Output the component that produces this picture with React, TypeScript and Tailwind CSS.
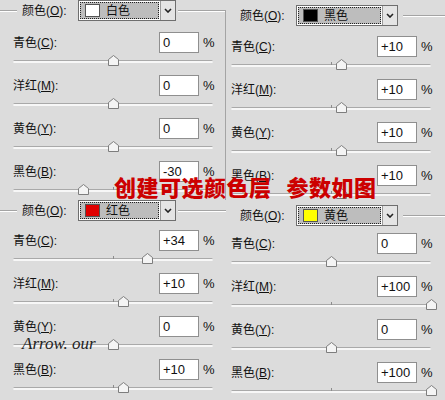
import React from "react";

const ROWS = [
  { cn: "青色", key: "C" },
  { cn: "洋红", key: "M" },
  { cn: "黄色", key: "Y" },
  { cn: "黑色", key: "B" },
];

function fmt(v: number) {
  return v > 0 ? `+${v}` : `${v}`;
}

function EtchedLine({ className = "" }: { className?: string }) {
  return <div className={`h-[2px] border-y border-t-[#a4a4a4] border-b-white ${className}`} />;
}

function Slider({ value }: { value: number }) {
  return (
    <div className="relative mt-[2px] flex h-[12px] w-[200px] items-center">
      <div className="h-[3px] w-full rounded-full border-t border-[#a9a9a9] bg-[#f7f7f7]" />
      <div className="absolute left-[100px] top-[3px] h-[3px] w-px bg-[#8c8c8c]" />
      <svg
        className="absolute top-0"
        style={{ left: 100 + value - 5 }}
        width="11"
        height="11"
        viewBox="0 0 11 11"
      >
        <path d="M0.5 10.5V4.5L5.5 0.5L10.5 4.5V10.5Z" fill="#f4f4f4" stroke="#7d7d7d" />
      </svg>
    </div>
  );
}

function Row({ cn, k, value }: { cn: string; k: string; value: number }) {
  return (
    <div className="flex h-[43px] w-[200px] shrink-0 flex-col">
      <div className="flex h-[21px] items-center">
        <span>
          {cn}(<span className="underline">{k}</span>):
        </span>
        <div className="ml-auto flex items-center gap-[4px]">
          <div className="h-[21px] w-[40px] border border-[#8f8f8f] bg-white pl-[3px] text-[13px] leading-[19px]">
            {fmt(value)}
          </div>
          <span className="w-[10px] text-[13px]">%</span>
        </div>
      </div>
      <Slider value={value} />
    </div>
  );
}

function Dropdown({ name, swatch, wide }: { name: string; swatch: string; wide?: boolean }) {
  return (
    <div className={`flex h-[21px] shrink-0 border border-[#6e6e6e] bg-white ${wide ? "w-[102px]" : "w-[98px]"}`}>
      <div className="m-px flex flex-1 items-center border border-dotted border-[#222] bg-[#bdbdbd]">
        <div className={`ml-[4px] h-[13px] w-[15px] border border-[#555] ${swatch}`} />
        <span className="ml-[6px]">{name}</span>
      </div>
      <div className="flex w-[15px] items-center justify-center border-l border-[#9a9a9a] bg-[#e4e4e4]">
        <svg width="8" height="5" viewBox="0 0 8 5">
          <path d="M1 1L4 4L7 1" fill="none" stroke="#222" strokeWidth="1.6" />
        </svg>
      </div>
    </div>
  );
}

function ColorLabel() {
  return (
    <span className="w-[56px] shrink-0">
      颜色(<span className="underline">O</span>):
    </span>
  );
}

function Rows({ values }: { values: number[] }) {
  return (
    <>
      {ROWS.map((r, i) => (
        <Row key={r.key} cn={r.cn} k={r.key} value={values[i]} />
      ))}
    </>
  );
}

export default function App() {
  return (
    <div className="relative grid h-[400px] w-[445px] grid-cols-[226px_219px] grid-rows-[200px_200px] overflow-hidden bg-[#dcdcdc] font-['Liberation_Sans','Noto_Sans_CJK_SC',sans-serif] text-[12px] text-[#111]">
      {/* white */}
      <div className="relative flex flex-col">
        <div className="flex h-[21px] shrink-0 items-center">
          <EtchedLine className="w-[17px]" />
          <span className="ml-[5px] flex">
            <ColorLabel />
          </span>
          <Dropdown name="白色" swatch="bg-white" />
          <EtchedLine className="ml-[2px] flex-1" />
        </div>
        <div className="ml-[13px] mt-[11px] flex shrink-0 flex-col">
          <Rows values={[0, 0, 0, -30]} />
        </div>
        <div className="absolute bottom-0 right-0 top-[10px] w-px bg-[#a4a4a4]" />
      </div>

      {/* black */}
      <div className="flex flex-col pt-[5px]">
        <div className="flex h-[21px] shrink-0 items-center pl-[14px]">
          <ColorLabel />
          <Dropdown name="黑色" swatch="bg-black" wide />
          <EtchedLine className="ml-[5px] flex-1" />
        </div>
        <div className="ml-[5px] mt-[10px] flex shrink-0 flex-col">
          <Rows values={[10, 10, 10, 10]} />
        </div>
      </div>

      {/* red */}
      <div className="flex flex-col">
        <div className="flex h-[21px] shrink-0 items-center">
          <EtchedLine className="w-[17px]" />
          <span className="ml-[5px] flex">
            <ColorLabel />
          </span>
          <Dropdown name="红色" swatch="bg-[#e00000]" />
          <EtchedLine className="ml-[2px] flex-1" />
        </div>
        <div className="ml-[13px] mt-[9px] flex shrink-0 flex-col">
          <Rows values={[34, 10, 0, 10]} />
        </div>
      </div>

      {/* yellow */}
      <div className="flex flex-col pt-[5px]">
        <div className="flex h-[21px] shrink-0 items-center pl-[14px]">
          <ColorLabel />
          <Dropdown name="黄色" swatch="bg-[#ffff00]" wide />
          <EtchedLine className="ml-[5px] flex-1" />
        </div>
        <div className="ml-[5px] mt-[7px] flex shrink-0 flex-col">
          <Rows values={[0, 100, 0, 100]} />
        </div>
      </div>

      <div className="absolute left-[114px] top-[175px] whitespace-nowrap font-['Noto_Sans_CJK_SC',sans-serif] text-[22px] font-black leading-none tracking-[0.5px] text-[#cc0000]">
        创建可选颜色层<span className="ml-[15px]">参数如图</span>
      </div>

      <div className="absolute left-[22px] top-[335px] font-['Liberation_Serif',serif] text-[17px] italic leading-none text-[#222]">
        Arrow. our
      </div>
    </div>
  );
}
